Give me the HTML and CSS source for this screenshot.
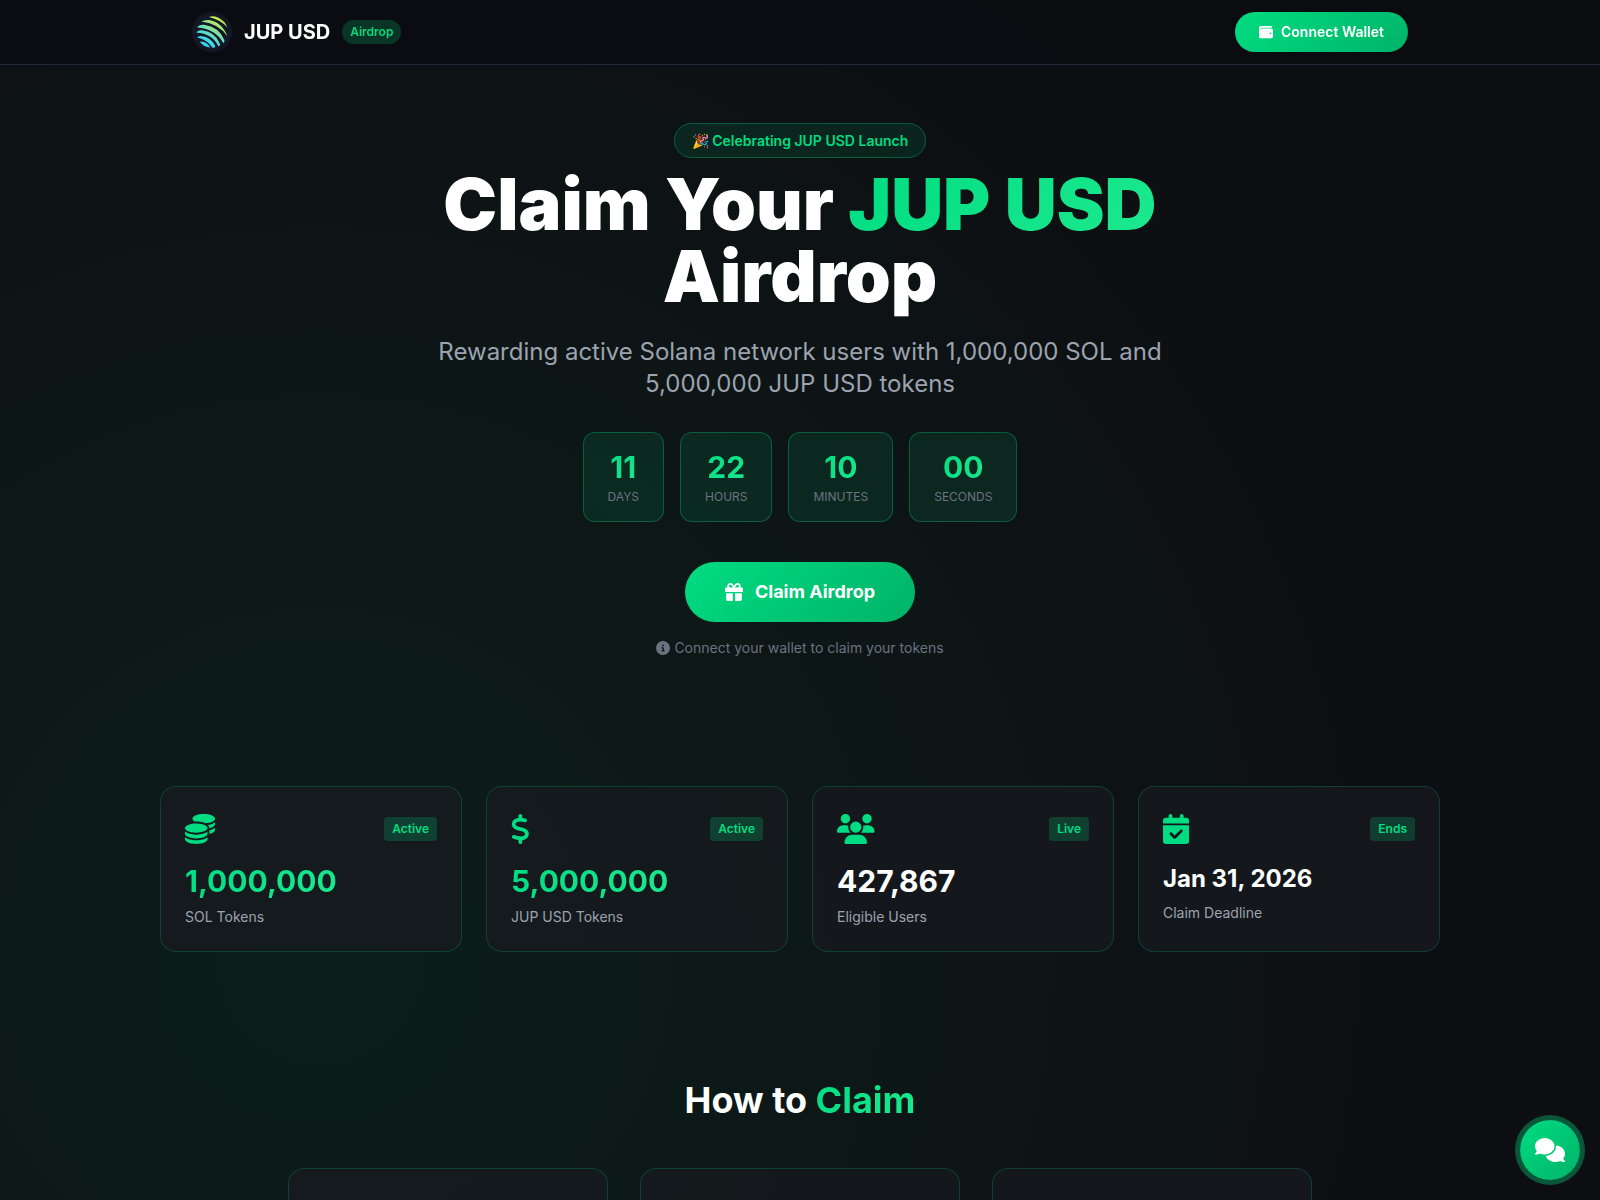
FILE: index.html
```html
<!DOCTYPE html>
<html lang="en">
<head>
<meta charset="utf-8">
<meta name="viewport" content="width=device-width, initial-scale=1">
<title>JUP USD Airdrop</title>
<link rel="stylesheet" href="styles.css">
</head>
<body>
<header class="site-header">
  <div class="header-inner">
    <div class="brand">
      <svg class="brand-logo" viewBox="0 0 40 40" aria-hidden="true">
        <defs>
          <linearGradient id="logo-fill" gradientUnits="userSpaceOnUse" x1="9" y1="34" x2="28" y2="5">
            <stop offset="0.16" stop-color="#30d5f2"/>
            <stop offset="0.5" stop-color="#74e0b4"/>
            <stop offset="0.9" stop-color="#c4ee50"/>
          </linearGradient>
        </defs>
        <circle cx="20" cy="20" r="20" fill="#141726"/>
        <g fill="url(#logo-fill)">
          <path d="M17 5Q21 3.400 26 5.600Q33 9 35.400 15.600Q30 8.400 17 5z"/>
          <path d="M9.300 9.500Q12 7.800 17 8Q30 10 35.500 24.500Q27 11.500 9.300 9.500z"/>
          <path d="M5.300 15.400Q6.500 12.600 12 12.800Q27 15 32.300 28Q33 30.500 31.200 31Q24 17 5.300 15.400z"/>
          <path d="M4.600 20.800Q5 18 10 18.200Q23.500 20 27.800 31.500Q28.500 34 26.300 34.200Q20 21.500 4.600 20.800z"/>
          <path d="M5.300 25.600Q5.600 23.800 9 23.900Q19 25 23 33.500Q23.600 36 20.500 35.800Q15 27.600 5.300 25.600z"/>
          <path d="M7.800 29.800Q14 28.500 18.300 35.600Q12 35.300 7.800 29.800z"/>
        </g>
      </svg>
      <span class="brand-name">JUP USD</span>
      <span class="brand-tag">Airdrop</span>
    </div>
    <button class="btn btn-small" type="button">
      <svg class="icon-14" viewBox="0 0 512 512" aria-hidden="true"><path d="M64 32C28.700 32 0 60.700 0 96V416c0 35.300 28.700 64 64 64H448c35.300 0 64-28.700 64-64V192c0-35.300-28.700-64-64-64H80c-8.800 0-16-7.200-16-16s7.200-16 16-16H448c17.700 0 32-14.300 32-32s-14.300-32-32-32H64zM416 272a32 32 0 1 1 0 64 32 32 0 1 1 0-64z"/></svg>
      Connect Wallet
    </button>
  </div>
</header>

<main>
  <section class="hero">
    <p class="hero-note"><span class="pill">🎉 Celebrating JUP USD Launch</span></p>
    <h1>Claim Your <span class="gradient-text">JUP USD</span> Airdrop</h1>
    <p class="lead">Rewarding active Solana network users with 1,000,000 SOL and 5,000,000 JUP USD tokens</p>
    <div class="countdown">
      <div class="unit"><div class="unit-value gradient-text">11</div><div class="unit-label">DAYS</div></div>
      <div class="unit"><div class="unit-value gradient-text">22</div><div class="unit-label">HOURS</div></div>
      <div class="unit"><div class="unit-value gradient-text">10</div><div class="unit-label">MINUTES</div></div>
      <div class="unit"><div class="unit-value gradient-text">00</div><div class="unit-label">SECONDS</div></div>
    </div>
    <button class="btn btn-large" type="button">
      <svg class="icon-18" viewBox="0 0 512 512" aria-hidden="true"><path d="M190.500 68.800L225.300 128H224 152c-22.100 0-40-17.900-40-40s17.900-40 40-40h2.200c14.900 0 28.800 7.900 36.300 20.800zM64 88c0 14.400 3.500 28 9.600 40H32c-17.700 0-32 14.300-32 32v64c0 17.700 14.300 32 32 32H480c17.700 0 32-14.300 32-32V160c0-17.700-14.300-32-32-32H438.400c6.100-12 9.600-25.600 9.600-40c0-48.600-39.400-88-88-88h-2.200c-31.900 0-61.500 16.900-77.700 44.400L256 85.500l-24.100-41C215.700 16.900 186.100 0 154.200 0H152C103.400 0 64 39.400 64 88zm336 0c0 22.100-17.900 40-40 40H288h-1.300l34.800-59.200C329.100 55.900 342.900 48 357.800 48H360c22.100 0 40 17.900 40 40zM32 288V464c0 26.500 21.500 48 48 48H224V288H32zM288 512H432c26.500 0 48-21.500 48-48V288H288V512z"/></svg>
      Claim Airdrop
    </button>
    <p class="hint">
      <svg class="icon-14" viewBox="0 0 512 512" aria-hidden="true"><path d="M256 512A256 256 0 1 0 256 0a256 256 0 1 0 0 512zM216 336h24V272H216c-13.300 0-24-10.700-24-24s10.700-24 24-24h48c13.300 0 24 10.700 24 24v88h8c13.300 0 24 10.700 24 24s-10.700 24-24 24H216c-13.300 0-24-10.700-24-24s10.700-24 24-24zm40-208a32 32 0 1 1 0 64 32 32 0 1 1 0-64z"/></svg>
      Connect your wallet to claim your tokens
    </p>
  </section>

  <section class="stats">
    <article class="card">
      <div class="card-top">
        <svg class="icon-30" viewBox="0 0 512 512" aria-hidden="true"><path d="M512 80c0 18-14.300 34.600-38.400 48c-29.100 16.100-72.500 27.500-122.300 30.900c-3.700-1.800-7.400-3.500-11.300-5C300.600 137.400 248.200 128 192 128c-8.300 0-16.400 .2-24.500 .6l-1.100-.6C142.300 114.600 128 98 128 80c0-44.200 86-80 192-80S512 35.800 512 80zM160.700 161.100c10.200-.7 20.700-1.100 31.300-1.100c62.200 0 117.400 12.300 152.500 31.400C369.300 204.900 384 221.700 384 240c0 4-.7 7.900-2.100 11.700c-4.600 13.200-17 25.300-35 35.500c-.1 .1-.3 .1-.4 .2c-.3 .2-.6 .3-.9 .5c-35 19.400-90.800 32-153.600 32c-59.600 0-112.900-11.300-148.200-29.100c-1.900-.9-3.700-1.900-5.500-2.900C14.300 274.600 0 258 0 240c0-34.800 53.400-64.500 128-75.400c10.500-1.500 21.400-2.700 32.700-3.500zM416 240c0-21.900-10.600-39.900-24.100-53.400c28.300-4.400 54.200-11.400 76.200-20.500c16.300-6.800 31.500-15.200 43.900-25.500V176c0 19.300-16.500 37.100-43.800 50.900c-14.600 7.400-32.400 13.700-52.400 18.500c.1-1.800 .2-3.500 .2-5.300zm-32 96c0 18-14.300 34.600-38.400 48c-1.800 1-3.600 1.900-5.500 2.900C304.900 404.700 251.600 416 192 416c-62.800 0-118.600-12.600-153.600-32C14.300 370.600 0 354 0 336V300.600c12.500 10.300 27.600 18.700 43.900 25.500C83.400 342.600 135.800 352 192 352s108.600-9.400 148.100-25.900c7.800-3.200 15.300-6.900 22.400-10.900c6.100-3.400 11.800-7.200 17.200-11.200c1.500-1.100 2.900-2.300 4.300-3.400V304v5.700V336zm32 0V304 278.100c19-4.200 36.500-9.500 52.100-16c16.300-6.800 31.500-15.200 43.900-25.500V272c0 10.500-5 21-14.900 30.900c-16.300 16.300-45 29.700-81.300 38.400c.1-1.700 .2-3.500 .2-5.300zM192 448c56.200 0 108.600-9.400 148.100-25.900c16.300-6.800 31.500-15.200 43.900-25.500V432c0 44.200-86 80-192 80S0 476.200 0 432V396.600c12.500 10.300 27.600 18.700 43.900 25.500C83.400 438.600 135.800 448 192 448z"/></svg>
        <span class="tag">Active</span>
      </div>
      <div class="value"><span class="gradient-text">1,000,000</span></div>
      <div class="label">SOL Tokens</div>
    </article>
    <article class="card">
      <div class="card-top">
        <svg class="icon-30" viewBox="0 0 320 512" aria-hidden="true"><path d="M160 0c17.700 0 32 14.300 32 32V67.700c1.600 .2 3.100 .4 4.700 .7c.4 .1 .7 .1 1.100 .2l48 8.800c17.400 3.200 28.900 19.900 25.700 37.200s-19.900 28.900-37.200 25.700l-47.500-8.700c-31.300-4.600-58.900-1.500-78.300 6.200s-27.200 18.300-29 28.100c-2 10.700-.5 16.700 1.200 20.400c1.800 3.900 5.500 8.300 12.800 13.200c16.300 10.700 41.300 17.700 73.700 26.300l2.900 .8c28.600 7.600 63.600 16.800 89.600 33.800c14.200 9.300 27.600 21.900 35.900 39.500c8.500 17.900 10.300 37.900 6.400 59.200c-6.900 38-33.100 63.400-65.600 76.700c-13.700 5.600-28.600 9.200-44.400 11V480c0 17.700-14.300 32-32 32s-32-14.300-32-32V445.100c-.4-.1-.9-.1-1.300-.2l-.2 0c-24.400-3.800-64.500-14.300-91.500-26.300c-16.100-7.200-23.400-26.100-16.200-42.200s26.100-23.400 42.200-16.200c20.900 9.300 55.300 18.500 75.200 21.600c31.900 4.700 58.200 2 76-5.300c16.900-6.900 24.600-16.900 26.800-28.900c1.900-10.600 .4-16.700-1.300-20.400c-1.900-4-5.600-8.400-13-13.300c-16.400-10.700-41.500-17.700-74-26.300l-2.800-.7C119.400 279.300 84.400 270 58.400 253c-14.200-9.300-27.500-22-35.800-39.600c-8.400-17.900-10.100-37.900-6.100-59.200C23.700 116 52.300 91.200 84.800 78.300c13.300-5.300 27.900-8.900 43.200-11V32c0-17.700 14.300-32 32-32z"/></svg>
        <span class="tag">Active</span>
      </div>
      <div class="value"><span class="gradient-text">5,000,000</span></div>
      <div class="label">JUP USD Tokens</div>
    </article>
    <article class="card">
      <div class="card-top">
        <svg class="icon-30" viewBox="0 0 640 512" aria-hidden="true"><path d="M144 0a80 80 0 1 1 0 160A80 80 0 1 1 144 0zM512 0a80 80 0 1 1 0 160A80 80 0 1 1 512 0zM0 298.700C0 239.800 47.800 192 106.700 192h42.700c15.900 0 31 3.500 44.600 9.700c-1.300 7.200-1.900 14.700-1.900 22.300c0 38.200 16.800 72.500 43.300 96c-.2 0-.4 0-.7 0H21.300C9.600 320 0 310.400 0 298.700zM405.300 320c-.2 0-.4 0-.7 0c26.600-23.500 43.300-57.800 43.300-96c0-7.600-.7-15-1.900-22.300c13.600-6.300 28.700-9.700 44.600-9.700h42.700C592.200 192 640 239.800 640 298.700c0 11.800-9.600 21.300-21.300 21.300H405.300zM224 224a96 96 0 1 1 192 0 96 96 0 1 1 -192 0zM128 485.300C128 411.700 187.700 352 261.300 352H378.700C452.300 352 512 411.700 512 485.300c0 14.700-11.900 26.700-26.700 26.700H154.700c-14.700 0-26.700-11.900-26.700-26.700z"/></svg>
        <span class="tag">Live</span>
      </div>
      <div class="value">427,867</div>
      <div class="label">Eligible Users</div>
    </article>
    <article class="card">
      <div class="card-top">
        <svg class="icon-30" viewBox="0 0 448 512" aria-hidden="true"><path d="M128 0c17.700 0 32 14.300 32 32V64H288V32c0-17.700 14.300-32 32-32s32 14.300 32 32V64h48c26.500 0 48 21.500 48 48v48H0V112C0 85.500 21.500 64 48 64H96V32c0-17.700 14.300-32 32-32zM0 192H448V464c0 26.500-21.500 48-48 48H48c-26.500 0-48-21.500-48-48V192zM329 305c9.400-9.400 9.400-24.600 0-33.900s-24.600-9.400-33.900 0l-95 95-47-47c-9.400-9.400-24.600-9.400-33.900 0s-9.400 24.600 0 33.900l64 64c9.400 9.400 24.600 9.400 33.900 0L329 305z"/></svg>
        <span class="tag">Ends</span>
      </div>
      <div class="value value-date">Jan 31, 2026</div>
      <div class="label">Claim Deadline</div>
    </article>
  </section>

  <section class="steps">
    <h2>How to <span class="gradient-text">Claim</span></h2>
    <div class="step-grid">
      <div class="card step"></div>
      <div class="card step"></div>
      <div class="card step"></div>
    </div>
  </section>
</main>

<button class="chat" type="button" aria-label="Open chat">
  <svg class="icon-24" viewBox="0 0 640 512" aria-hidden="true"><path d="M208 352c114.900 0 208-78.800 208-176S322.900 0 208 0S0 78.800 0 176c0 38.600 14.700 74.300 39.600 103.400c-3.500 9.400-8.700 17.700-14.200 24.700c-4.800 6.200-9.700 11-13.300 14.300c-1.800 1.600-3.300 2.900-4.300 3.700c-.5 .4-.9 .7-1.100 .8l-.2 .2C1 327.200-1.400 334.400 .8 340.900S9.100 352 16 352c21.800 0 43.800-5.600 62.100-12.500c9.200-3.500 17.800-7.400 25.300-11.400C134.100 343.300 169.800 352 208 352zM448 176c0 112.300-99.100 196.900-216.500 207C255.800 457.400 336.400 512 432 512c38.200 0 73.900-8.700 104.700-23.900c7.500 4 16 7.900 25.200 11.400c18.300 6.900 40.300 12.500 62.100 12.500c6.900 0 13.100-4.500 15.200-11.100c2.100-6.600-.2-13.800-5.800-17.900l-.2-.2c-.2-.2-.6-.4-1.100-.8c-1-.8-2.500-2-4.300-3.700c-3.600-3.300-8.500-8.100-13.300-14.300c-5.500-7-10.700-15.400-14.200-24.700c24.900-29 39.600-64.700 39.600-103.400c0-92.800-84.900-168.900-192.600-175.500c.4 5.100 .6 10.300 .6 15.500z"/></svg>
</button>
</body>
</html>
```
FILE: styles.css
```css
:root {
  --bg: #0d0e12;
  --green: #00dc82;
  --green-dark: #00b368;
  --muted: #9ca3af;
  --faint: #6b7280;
}

* {
  box-sizing: border-box;
  margin: 0;
  padding: 0;
}

body {
  min-height: 100vh;
  color: #fff;
  font-family: Inter, "Liberation Sans", sans-serif;
  font-size: 16px;
  line-height: 24px;
  background:
    radial-gradient(circle at 20% 80%, rgba(0, 220, 120, 0.08) 0%, transparent 75%) fixed,
    var(--bg);
}

button {
  border: 0;
  color: inherit;
  font-family: inherit;
  cursor: pointer;
}

svg {
  display: block;
  flex: none;
  fill: currentColor;
}

.icon-14 { height: 14px; width: 14px; }
.icon-18 { height: 18px; width: 18px; }
.icon-24 { height: 24px; width: 30px; }
.icon-30 { height: 30px; width: auto; color: var(--green); }

.gradient-text {
  color: transparent;
  background: linear-gradient(135deg, #00dc82, #1de98f);
  -webkit-background-clip: text;
  background-clip: text;
}

.site-header {
  position: fixed;
  top: 0;
  left: 0;
  right: 0;
  z-index: 10;
  background: rgba(12, 13, 17, 0.95);
  border-bottom: 1px solid #1f2937;
}

.header-inner {
  display: flex;
  align-items: center;
  justify-content: space-between;
  max-width: 1280px;
  margin: 0 auto;
  padding: 12px 32px;
}

.brand {
  display: flex;
  align-items: center;
  gap: 12px;
}

.brand-logo {
  width: 40px;
  height: 40px;
}

.brand-name {
  font-size: 20px;
  line-height: 28px;
  font-weight: 700;
}

.brand-tag,
.tag {
  padding: 4px 8px;
  font-size: 12px;
  line-height: 16px;
  font-weight: 600;
  color: var(--green);
  background: rgba(0, 220, 130, 0.2);
}

.brand-tag { border-radius: 12px; }
.tag { border-radius: 4px; }

.btn {
  display: inline-flex;
  align-items: center;
  border-radius: 999px;
  background: linear-gradient(135deg, var(--green), var(--green-dark));
}

.btn-small {
  gap: 8px;
  padding: 10px 24px;
  font-size: 14px;
  line-height: 20px;
  font-weight: 600;
}

.btn-large {
  gap: 12px;
  margin-top: 40px;
  padding: 16px 40px;
  font-size: 18px;
  line-height: 28px;
  font-weight: 700;
}

.hero {
  max-width: 960px;
  margin: 0 auto;
  padding: 128px 32px 64px;
  text-align: center;
}

.hero-note {
  margin-bottom: 15px;
}

.pill {
  padding: 8px 17px;
  border: 1px solid rgba(0, 220, 130, 0.3);
  border-radius: 999px;
  font-size: 14px;
  font-weight: 600;
  color: var(--green);
  background: rgba(0, 220, 130, 0.1);
}

h1 {
  font-size: 72px;
  line-height: 72px;
  font-weight: 900;
}

.lead {
  max-width: 768px;
  margin: 24px auto 32px;
  font-size: 24px;
  line-height: 32px;
  color: var(--muted);
}

.countdown {
  display: flex;
  justify-content: center;
  gap: 16px;
}

.unit {
  padding: 16px 24px;
  border: 1px solid rgba(0, 220, 130, 0.3);
  border-radius: 12px;
  background: rgba(0, 220, 130, 0.1);
}

.unit-value {
  font-size: 30px;
  line-height: 36px;
  font-weight: 700;
}

.unit-label {
  margin-top: 4px;
  font-size: 12px;
  line-height: 16px;
  color: var(--faint);
}

.hint {
  display: flex;
  align-items: center;
  justify-content: center;
  gap: 4px;
  margin-top: 16px;
  font-size: 14px;
  line-height: 20px;
  color: var(--faint);
}

.stats {
  display: grid;
  grid-template-columns: repeat(4, 1fr);
  gap: 24px;
  max-width: 1280px;
  margin: 0 auto;
  padding: 64px 0;
}

.card {
  padding: 24px;
  border: 1px solid rgba(0, 220, 130, 0.2);
  border-radius: 16px;
  background: rgba(24, 26, 32, 0.7);
}

.card-top {
  display: flex;
  align-items: center;
  justify-content: space-between;
  height: 36px;
  margin-bottom: 16px;
}

.value {
  margin-bottom: 8px;
  font-size: 30px;
  line-height: 36px;
  font-weight: 700;
}

.value-date {
  font-size: 24px;
  line-height: 32px;
}

.label {
  font-size: 14px;
  line-height: 20px;
  color: var(--muted);
}

.steps {
  max-width: 1024px;
  margin: 0 auto;
  padding: 64px 0;
}

h2 {
  margin-bottom: 48px;
  font-size: 36px;
  line-height: 40px;
  font-weight: 700;
  text-align: center;
}

.step-grid {
  display: grid;
  grid-template-columns: repeat(3, 1fr);
  gap: 32px;
}

.step {
  min-height: 240px;
}

.chat {
  position: fixed;
  right: 20px;
  bottom: 20px;
  z-index: 20;
  display: flex;
  align-items: center;
  justify-content: center;
  width: 60px;
  height: 60px;
  border-radius: 50%;
  background: linear-gradient(135deg, var(--green), var(--green-dark));
  box-shadow: 0 0 0 5px rgba(0, 220, 130, 0.36);
}
```
